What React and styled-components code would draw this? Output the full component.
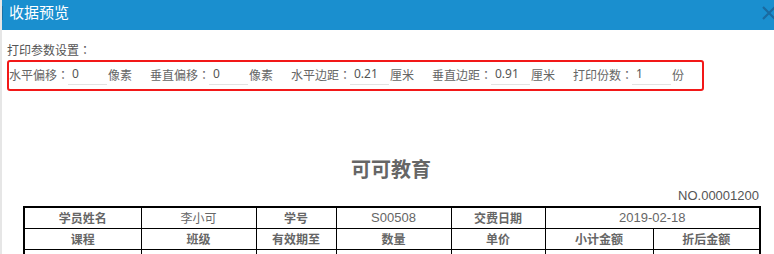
import React from "react";
import styled, { createGlobalStyle } from "styled-components";

const Global = createGlobalStyle`
  html, body { margin: 0; padding: 0; background: #fff; }
  body { font-family: "Noto Sans CJK SC", "Microsoft YaHei", "Noto Sans", sans-serif; }
  * { box-sizing: border-box; }
`;

const Modal = styled.div`
  width: 774px;
  height: 254px;
  overflow: hidden;
  position: relative;
  border-left: 2px solid #e6e6e6;
`;

const Header = styled.div`
  height: 30px;
  background: #1a8fcf;
  display: flex;
  align-items: center;
  justify-content: space-between;
  padding-left: 7px;
  position: relative;
`;

const Title = styled.div`
  color: #fff;
  font-size: 15px;
  line-height: 30px;
  margin-top: -6px;
`;

const EdgeMark = styled.div`
  position: absolute;
  left: -2px;
  top: 6px;
  width: 3px;
  height: 14px;
  background: #1872a8;
`;

const Close = styled.svg`
  position: absolute;
  right: -3px;
  top: 5px;
`;

const Body = styled.div`
  padding: 12px 0 0 5px;
`;

const SectionLabel = styled.div`
  font-size: 12px;
  line-height: 16px;
  color: #555;
  height: 18px;
`;

const Colon = styled.span`
  font-family: "Noto Sans CJK TC", "Noto Sans CJK SC", sans-serif;
`;

const ParamBox = styled.div`
  width: 697px;
  height: 31px;
  border: 2.5px solid #f21818;
  border-radius: 3px;
  display: flex;
  align-items: flex-start;
  padding-top: 1px;
`;

const Group = styled.div`
  display: flex;
  align-items: center;
  height: 22px;
  margin-right: ${(p) => (p.$last ? 0 : 18)}px;
`;

const Label = styled.span`
  font-size: 12px;
  color: #666;
  width: 59px;
  white-space: nowrap;
`;

const Input = styled.div`
  width: 39px;
  height: 22px;
  border-bottom: 1px solid #e2e2e2;
  font-size: 12px;
  color: #555;
  line-height: 21px;
  padding-left: 4px;
  font-family: "Noto Sans", "Liberation Sans", sans-serif;
`;

const Unit = styled.span`
  font-size: 12px;
  color: #666;
  width: 25px;
  padding-left: 1px;
`;

const Heading = styled.div`
  margin-top: 64px;
  text-align: center;
  font-size: 20px;
  font-weight: 700;
  color: #666;
  line-height: 28px;
  width: 774px;
  margin-left: -3px;
`;

const Number = styled.div`
  width: 752px;
  text-align: right;
  font-family: "Liberation Sans", Arial, sans-serif;
  font-size: 13px;
  color: #555;
  line-height: 16px;
  margin-top: 5px;
`;

const Table = styled.table`
  margin-left: 16px;
  margin-top: 2px;
  width: 736px;
  border-collapse: collapse;
  border: 2px solid #000;
  table-layout: fixed;
`;

const Cell = styled.td`
  border: 1px solid #000;
  height: 21px;
  padding: 0;
  text-align: center;
  font-size: ${(p) => (p.$latin ? 13 : 12)}px;
  color: #666;
  font-weight: ${(p) => (p.$head ? 700 : 400)};
  line-height: 18px;
  font-family: ${(p) =>
    p.$latin
      ? `"Liberation Sans", Arial, sans-serif`
      : `"Noto Sans CJK SC", sans-serif`};
`;

const params = [
  ["水平偏移", "0", "像素"],
  ["垂直偏移", "0", "像素"],
  ["水平边距", "0.21", "厘米"],
  ["垂直边距", "0.91", "厘米"],
  ["打印份数", "1", "份"],
];

const widths = [117, 115, 80, 115, 94, 108, 107];

export default function App() {
  return (
    <>
      <Global />
      <Modal>
        <Header>
          <EdgeMark />
          <Title>收据预览</Title>
          <Close width="16" height="16" viewBox="0 0 16 16">
            <path d="M2 2 L14 14 M14 2 L2 14" stroke="#1a6aa0" strokeWidth="2.2" />
          </Close>
        </Header>
        <Body>
          <SectionLabel>
            打印参数设置<Colon>：</Colon>
          </SectionLabel>
          <ParamBox>
            {params.map(([l, v, u], i) => (
              <Group key={l} $last={i === params.length - 1}>
                <Label>
                  {l}
                  <Colon>：</Colon>
                </Label>
                <Input>{v}</Input>
                <Unit>{u}</Unit>
              </Group>
            ))}
          </ParamBox>
          <Heading>可可教育</Heading>
          <Number>NO.00001200</Number>
          <Table>
            <colgroup>
              {widths.map((w, i) => (
                <col key={i} style={{ width: w }} />
              ))}
            </colgroup>
            <tbody>
              <tr>
                <Cell $head>学员姓名</Cell>
                <Cell>李小可</Cell>
                <Cell $head>学号</Cell>
                <Cell $latin>S00508</Cell>
                <Cell $head>交费日期</Cell>
                <Cell $latin colSpan={2}>2019-02-18</Cell>
              </tr>
              <tr>
                <Cell $head>课程</Cell>
                <Cell $head>班级</Cell>
                <Cell $head>有效期至</Cell>
                <Cell $head>数量</Cell>
                <Cell $head>单价</Cell>
                <Cell $head>小计金额</Cell>
                <Cell $head>折后金额</Cell>
              </tr>
              <tr>
                <Cell>&nbsp;</Cell>
                <Cell />
                <Cell />
                <Cell />
                <Cell />
                <Cell />
                <Cell />
              </tr>
            </tbody>
          </Table>
        </Body>
      </Modal>
    </>
  );
}
